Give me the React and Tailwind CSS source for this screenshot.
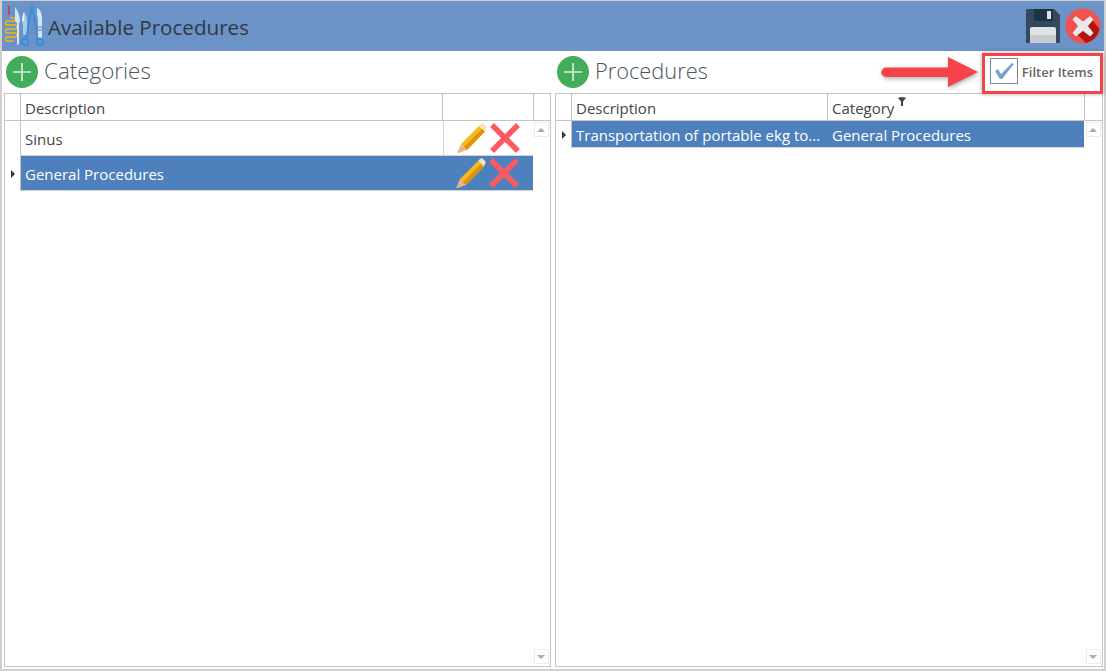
import React from 'react';

const FONT = "font-['Open_Sans','Noto_Sans',sans-serif]";

const ProcedureIcon = () => (
    <svg width="44" height="46" viewBox="0 0 44 46" className="shrink-0">
        <path d="M7 3v9" stroke="#d9363e" strokeWidth="1.600" />
        <path d="M8 15h4c2 0 2 3 0 3H5c-2 0-2 4 0 4h8c2 0 2 4 0 4H5c-2 0-2 4 0 4h8c2 0 2 4 0 4H5c-2 0-2 4 0 4h7" fill="none" stroke="#f2b90f" strokeWidth="1.500" />
        <path d="M13 4c3 4 5 9 5 15l-1 1v21c0 1-2 1-2 0V20l-2-2z" fill="#cfe6f7" />
        <path d="M22 9c-1 2-2 6-2 10l1 2v11h4V19c0-4-1-8-3-10z" fill="#a9cdea" />
        <path d="M22 9c-1 2-2 5-2 9h2z" fill="#e4f1fb" />
        <path d="M30 3l-6 33M30 3l6 33" stroke="#2f8fe6" strokeWidth="1.600" fill="none" />
        <circle cx="23" cy="39" r="3.400" fill="none" stroke="#2f8fe6" strokeWidth="1.700" />
        <circle cx="38" cy="39" r="3.400" fill="none" stroke="#2f8fe6" strokeWidth="1.700" />
        <path d="M35 5c3 1 5 5 5 10v19c0 1-4 1-4 0V17l-1-5z" fill="#cfe6f7" />
        <path d="M36 24h4M36 27h4" stroke="#4f6fb0" strokeWidth="1" />
    </svg>
);

const SaveIcon = () => (
    <svg width="36" height="36" viewBox="0 0 36 36">
        <path d="M2 1h27l6 6v27a1 1 0 0 1-1 1H2a1 1 0 0 1-1-1V2a1 1 0 0 1 1-1z" fill="#34495e" />
        <rect x="9" y="1" width="19" height="12" fill="#1f3347" />
        <rect x="22" y="3" width="4" height="8" fill="#dfe3e6" />
        <path d="M5 35V21a2 2 0 0 1 2-2h22a2 2 0 0 1 2 2v14z" fill="#dfe3e6" />
        <path d="M5 27h26v8H5z" fill="#c6cbcf" />
    </svg>
);

const CloseIcon = () => (
    <svg width="36" height="36" viewBox="0 0 36 36">
        <circle cx="18" cy="18" r="17.500" fill="#f0524f" />
        <path d="M25 9l9.500 12a17.500 17.500 0 0 1-13.500 14L11 25z" fill="#b01513" />
        <path d="M11 9l7 5.500L25 9l2.500 2.500L22 18l5.500 7-2.500 2.500-7-5.500-7 5.500L8.500 25l5.500-7-5.500-6.500z" fill="#e9e9e9" strokeLinejoin="round" stroke="#e9e9e9" strokeWidth="1.500" />
    </svg>
);

const AddIcon = () => (
    <svg width="32" height="32" viewBox="0 0 32 32" className="shrink-0">
        <circle cx="16" cy="16" r="16" fill="#43ad5b" />
        <path d="M16 7v18M7 16h18" stroke="#d5efdb" strokeWidth="1.700" />
    </svg>
);

const PencilIcon = () => (
    <svg width="31" height="31" viewBox="0 0 31 31" className="shrink-0">
        <path d="M4 21l6 6-10 3.500z" fill="#e8b68e" />
        <path d="M4 21L22 3l6 5.500L10 27z" fill="#f7b91d" />
        <path d="M7 24L25 5.700 28 8.500 10 27z" fill="#dd930b" />
        <path d="M22 3l2-2c1-1 2-1 3 0l2 2c1 1 1 2 0 3l-1 2.500z" fill="#f6e3c0" />
    </svg>
);

const DeleteIcon = () => (
    <svg width="30" height="30" viewBox="0 0 30 30" className="shrink-0">
        <path d="M4 4l22 22M26 4L4 26" stroke="#fb5a61" strokeWidth="5.500" strokeLinecap="square" />
    </svg>
);

const RowMarker = () => (
    <div className="w-0 h-0 border-y-[4px] border-y-transparent border-l-[4px] border-l-[#333]" />
);

const ScrollButton = ({ down }) => (
    <div className="w-[15px] h-[15px] border border-[#ececec] flex items-center justify-center">
        <div className={`w-0 h-0 border-x-[4px] border-x-transparent ${down ? 'border-t-[4px] border-t-[#aaa]' : 'border-b-[4px] border-b-[#aaa]'}`} />
    </div>
);

const Scrollbar = () => (
    <div className="absolute right-[1px] top-[28px] bottom-[2px] w-[16px] flex flex-col justify-between items-center">
        <ScrollButton />
        <ScrollButton down />
    </div>
);

const categories = [
    { name: 'Sinus' },
    { name: 'General Procedures', selected: true },
];

const CategoriesPanel = () => (
    <div className="w-[547px] flex flex-col shrink-0">
        <div className="h-[42px] flex items-center gap-[6px] pl-[2px]">
            <AddIcon />
            <span className="text-[22.4px] pb-[2px] font-light text-[#4a5560]">Categories</span>
        </div>
        <div className="relative flex-1 border border-[#c4c4c4]">
            <div className="flex h-[27px] border-b border-[#c4c4c4] text-[15px] text-[#444]">
                <div className="w-[16px] border-r border-[#c4c4c4]" />
                <div className="w-[422px] border-r border-[#c4c4c4] pl-[4px] pt-[3px] flex items-center">Description</div>
                <div className="w-[91px] border-r border-[#c4c4c4]" />
            </div>
            {categories.map((c) => (
                <div key={c.name} className="flex h-[35px] text-[15px] text-[#444]">
                    <div className="w-[16px] border-r border-[#c4c4c4] flex items-center pl-[6px]">
                        {c.selected && <RowMarker />}
                    </div>
                    <div className={`w-[512px] flex border-b border-[#d4d4d4] ${c.selected ? 'bg-[#4d80bc] text-white' : ''}`}>
                        <div className="w-[422px] pl-[4px] pt-[2px] flex items-center">{c.name}</div>
                        <div className={`w-[90px] flex items-center pl-[13px] gap-[2px] ${c.selected ? '' : 'border-l border-[#c9d9e6]'}`}>
                            <PencilIcon />
                            <DeleteIcon />
                        </div>
                    </div>
                </div>
            ))}
            <Scrollbar />
        </div>
    </div>
);

const ProceduresPanel = () => (
    <div className="w-[548px] flex flex-col shrink-0">
        <div className="h-[42px] flex items-center gap-[6px] pl-[2px]">
            <AddIcon />
            <span className="text-[21.800px] pb-[2px] font-light text-[#4a5560]">Procedures</span>
            <div className="ml-auto mr-[10px] pb-[3px] flex items-center gap-[4px]">
                <div className="w-[28px] h-[26px] border border-[#7e8794] flex items-center justify-center">
                    <svg width="22" height="20" viewBox="0 0 22 20">
                        <path d="M2 10l3-2 3 5L19 2l2 1L9 18H7z" fill="#7a9fd1" />
                    </svg>
                </div>
                <span className="text-[13px] pt-[5px] font-semibold text-[#666]">Filter Items</span>
            </div>
        </div>
        <div className="relative flex-1 border border-[#c4c4c4]">
            <div className="flex h-[27px] border-b border-[#c4c4c4] text-[15px] text-[#444]">
                <div className="w-[16px] border-r border-[#c4c4c4]" />
                <div className="w-[256px] border-r border-[#c4c4c4] pl-[4px] pt-[3px] flex items-center">Description</div>
                <div className="w-[257px] border-r border-[#c4c4c4] pl-[4px] pt-[3px] flex items-center relative">
                    Category
                    <svg width="8" height="9" viewBox="0 0 8 9" className="absolute left-[70px] top-[3px]">
                        <path d="M0 1c0-1 8-1 8 0L5 4.500V9H3V4.500z" fill="#444" />
                    </svg>
                </div>
            </div>
            <div className="flex h-[27px] text-[15px] text-white">
                <div className="w-[16px] border-r border-[#c4c4c4] flex items-center pl-[6px]">
                    <RowMarker />
                </div>
                <div className="w-[512px] flex bg-[#4d80bc] border-b border-[#d4d4d4]">
                    <div className="w-[256px] pl-[4px] pt-[2px] flex items-center whitespace-nowrap overflow-hidden">Transportation of portable ekg to...</div>
                    <div className="pl-[4px] pt-[2px] flex items-center">General Procedures</div>
                </div>
            </div>
            <Scrollbar />
        </div>
    </div>
);

export default function App() {
    return (
        <div className={`relative w-[1106px] h-[671px] overflow-hidden bg-[#d0d0d0] pt-px px-[2px] pb-[2px] ${FONT}`}>
            <div className="h-full flex flex-col bg-white">
                <div className="h-[50px] shrink-0 bg-[#6b93c7] flex items-center">
                    <ProcedureIcon />
                    <span className="text-[20.600px] pt-[3px] text-[#33383f] ml-[2px]">Available Procedures</span>
                    <div className="ml-auto mr-[3px] flex items-center gap-[4px]">
                        <SaveIcon />
                        <CloseIcon />
                    </div>
                </div>
                <div className="flex-1 flex gap-[4px] pl-[2px] pb-[2px]">
                    <CategoriesPanel />
                    <ProceduresPanel />
                </div>
            </div>

            {/* annotation over the screenshot */}
            <div className="absolute left-[982px] top-[53px] w-[121px] h-[41px] border-[3px] border-[#f6434a] shadow-[0_0_4px_rgba(0,0,0,0.35)]" />
            <svg width="104" height="38" viewBox="0 0 104 38" className="absolute left-[878px] top-[54px] drop-shadow-[1px_2px_2px_rgba(0,0,0,0.3)]">
                <path d="M8 13.500h62V3l30 15-30 15V23H8a4.700 4.700 0 0 1 0-9.500z" fill="#f6434a" />
            </svg>
        </div>
    );
}
